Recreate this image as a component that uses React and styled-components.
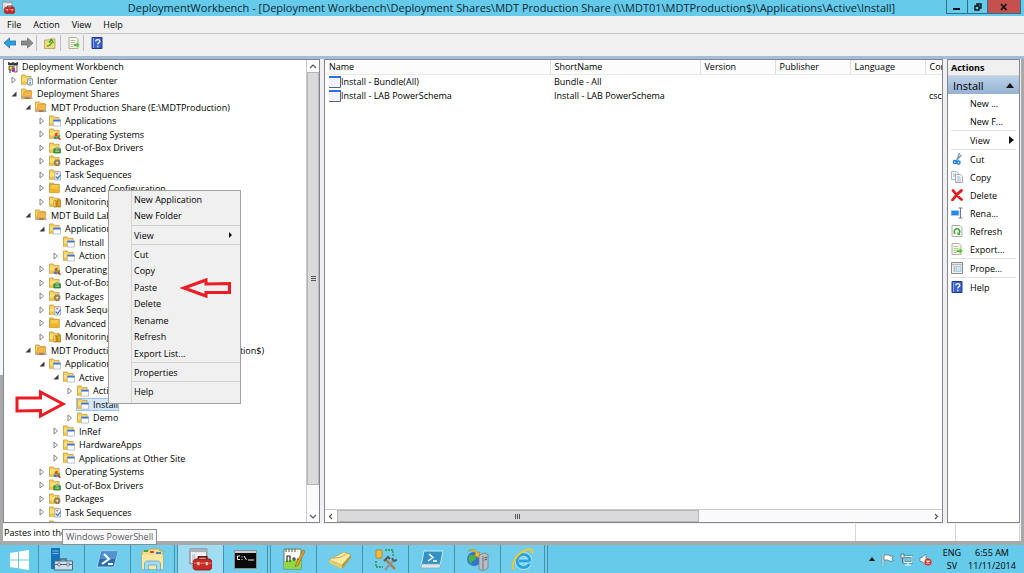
import React from "react";
import styled, { createGlobalStyle, css } from "styled-components";

const FONT = '"Open Sans", "Noto Sans", sans-serif';

const GlobalStyle = createGlobalStyle`
  *, *::before, *::after { box-sizing: border-box; }
  html, body { margin: 0; padding: 0; }
  body { font-family: ${FONT}; font-size: 9px; color: #000; overflow: hidden; }
  button { font: inherit; color: inherit; border: 0; padding: 0; margin: 0; background: none; text-align: left; }
  ul { list-style: none; margin: 0; padding: 0; }
  svg { display: block; flex: none; }
`;

/* ---------- window frame ---------- */

const Desktop = styled.div`
  position: relative;
  display: flex;
  flex-direction: column;
  height: 100vh;
  background: #f0f0f0;
  white-space: nowrap;
`;

const TitleBar = styled.header`
  flex: none;
  display: flex;
  justify-content: space-between;
  align-items: flex-start;
  height: 16px;
  padding: 0 3px 0 2px;
  background: #66cbea;
`;

const AppIcon = styled.span`
  padding-top: 1px;
`;

const Title = styled.h1`
  flex: 1;
  margin: 0;
  padding-left: 62px;
  font-size: 11px;
  font-weight: 400;
  line-height: 16px;
  text-align: center;
  color: #0c2832;
`;

const Caption = styled.div`
  display: flex;
  height: 14px;
  border: 1px solid #2f6f88;
  border-top: 0;
`;

const CaptionButton = styled.button`
  display: flex;
  align-items: center;
  justify-content: center;
  width: ${(p) => (p.$close ? 33 : 20)}px;
  background: ${(p) => (p.$close ? "#c6504c" : "#66cbea")};
  & + & { border-left: 1px solid #2f6f88; }
`;

const MenuBar = styled.nav`
  flex: none;
  display: flex;
  align-items: center;
  gap: 12px;
  height: 18px;
  padding: 0 7px;
  border-bottom: 1px solid #c4c4c4;
`;

const MenuButton = styled.button`
  line-height: 16px;
`;

const ToolBar = styled.div`
  flex: none;
  display: flex;
  align-items: center;
  height: 22px;
  padding: 0 4px 4px;
`;

const ToolButton = styled.button`
  margin-right: ${(p) => p.$after || 0}px;
`;

const ToolDivider = styled.span`
  width: 1px;
  height: 16px;
  margin-right: 7px;
  background: #bdbdbd;
`;

const Workspace = styled.main`
  flex: 1;
  min-height: 0;
  display: flex;
  gap: 4px;
  padding: 0 4px 0 3px;
  border-top: 3px solid #a3bcd8;
  background:
    linear-gradient(#f4f6fa 68%, #a9a9a9 68%) left / 3px 100% no-repeat,
    linear-gradient(to left, #a9a9a9 3px, #f0f0f0 3px);
`;

const Pane = styled.section`
  display: flex;
  min-width: 0;
  overflow: hidden;
  border: 1px solid #828790;
  background: #fff;
`;

const TreePane = styled(Pane)`
  flex: 0 0 317px;
`;

const ListPane = styled(Pane)`
  flex: 1;
  flex-direction: column;
`;

const ActionsPane = styled(Pane)`
  flex: 0 0 73px;
  flex-direction: column;
`;

/* ---------- scroll bars ---------- */

const ScrollBar = styled.div`
  flex: none;
  display: flex;
  flex-direction: ${(p) => (p.$vertical ? "column" : "row")};
  ${(p) => (p.$vertical ? "width: 13px;" : "height: 13px;")}
  background: #fafafa;
  border: 0 solid #c9c9c9;
  ${(p) => (p.$vertical ? "border-left-width: 1px;" : "border-top-width: 1px;")}
`;

const ScrollButton = styled.button`
  display: flex;
  align-items: center;
  justify-content: center;
  width: 12px;
  height: 12px;
  background: #fff;
`;

const Thumb = styled.div`
  display: flex;
  align-items: center;
  justify-content: center;
  flex: ${(p) => p.$share};
  border: 1px solid #b5b5b5;
  background: #dadada;
`;

const Track = styled.div`
  flex: ${(p) => p.$share};
`;

/* ---------- tree ---------- */

const Tree = styled.ul`
  flex: 1;
  min-width: 0;
  overflow: hidden;
  display: grid;
  grid-auto-rows: 13px 14px;
  align-content: start;
`;

const TreeRow = styled.li`
  display: flex;
  align-items: center;
  gap: 2px;
  padding-left: ${(p) => (p.$level ? p.$level * 14 - 8 : 3)}px;
`;

const Twisty = styled.button`
  display: flex;
  align-items: center;
  justify-content: center;
  width: 8px;
  height: 12px;
`;

const TreeLabel = styled.span`
  display: flex;
  align-items: center;
  gap: 4px;
  height: 13px;
  padding: 0 1px;
  ${(p) => p.$selected && css`
    background: #d3e6fb;
    outline: 1px solid #9cc4ee;
    outline-offset: -1px;
  `}
`;

/* ---------- list ---------- */

const ListBody = styled.div`
  flex: 1;
  min-height: 0;
  overflow: hidden;
`;

const Table = styled.table`
  width: 675px;
  table-layout: fixed;
  border-collapse: collapse;
  th, td {
    padding: 0 0 0 4px;
    height: 14px;
    line-height: 14px;
    font-weight: 400;
    text-align: left;
  }
  th {
    border-right: 1px solid #dcdcdc;
    border-bottom: 1px solid #e8e8e8;
    background: #fcfcfc;
  }
`;

const NameCell = styled.span`
  display: flex;
  align-items: center;
  height: 14px;
`;

/* ---------- actions ---------- */

const ActionsTitle = styled.h2`
  margin: 0;
  height: 16px;
  padding-left: 3px;
  border-bottom: 1px solid #d5d5d5;
  background: #f0f0f0;
  font-size: 9px;
  font-weight: 700;
  line-height: 16px;
`;

const ActionsGroup = styled.button`
  display: flex;
  justify-content: space-between;
  align-items: center;
  height: 18px;
  padding: 0 5px;
  background: linear-gradient(#bcd2ea, #96b1d2);
  font-size: 11px;
`;

const ActionItem = styled.button`
  display: flex;
  align-items: center;
  gap: 7px;
  width: 100%;
  height: 18px;
  padding: 0 5px 0 3px;
`;

const ActionText = styled.span`
  flex: 1;
`;

const ActionRule = styled.li`
  height: 1px;
  margin: 0 3px;
  background: #e2e2e2;
`;

const IconSlot = styled.span`
  width: 12px;
  height: 12px;
`;

/* ---------- status bar, task bar ---------- */

const StatusBar = styled.footer`
  flex: none;
  display: flex;
  height: 22px;
  padding: 1px 4px 0 3px;
  border-bottom: 4px solid #a9a9a9;
  background: linear-gradient(to right, #a9a9a9 3px, #f0f0f0 3px, #f0f0f0 calc(100% - 3px), #a9a9a9 calc(100% - 3px));
`;

const StatusCell = styled.div`
  flex: ${(p) => (p.$width ? `0 0 ${p.$width}px` : "1")};
  border-right: 1px solid #d7d7d7;
  background: #fff;
  line-height: 18px;
  padding-left: 1px;
`;

const TaskBar = styled.nav`
  flex: none;
  display: flex;
  height: 28px;
  background: #66cbea;
`;

const TaskButton = styled.button`
  display: flex;
  align-items: center;
  justify-content: center;
  width: ${(p) => (p.$start ? 39 : p.$stacked ? 47 : 46)}px;
  border-right: 1px solid #4590ab;
  background: ${(p) => (p.$active ? "#a2dcf2" : p.$start ? "#66cbea" : "#70cdeb")};
  ${(p) => p.$stacked && css`
    padding-right: 3px;
    box-shadow: inset -2px 0 #70cdeb, inset -3px 0 #4590ab;
  `}
`;

const Tray = styled.div`
  display: flex;
  align-items: center;
  margin-left: auto;
  padding-right: 2px;
`;

const TrayIcons = styled.div`
  display: flex;
  align-items: center;
  gap: 6px;
  margin-right: 10px;
`;

const TrayText = styled.div`
  width: ${(p) => p.$width}px;
  line-height: 13px;
  text-align: center;
`;

/* ---------- overlays ---------- */

const ContextMenu = styled.div`
  position: absolute;
  left: 108px;
  top: 190px;
  width: 133px;
  padding-bottom: 4px;
  border: 1px solid #a0a0a0;
  background: linear-gradient(to right, #f0f0f0 22px, #d4d4d4 22px, #d4d4d4 23px, #f0f0f0 23px);
`;

const MenuGroup = styled.div`
  display: grid;
  grid-auto-rows: 16px 17px;
  & + & {
    padding-top: 3px;
    background: linear-gradient(#cfcfcf, #cfcfcf) 23px 1px / 108px 1px no-repeat;
  }
`;

const MenuItem = styled.button`
  display: flex;
  align-items: center;
  justify-content: space-between;
  padding: 0 8px 0 25px;
`;

const Tooltip = styled.div`
  position: absolute;
  left: 62px;
  bottom: 28px;
  height: 16px;
  padding: 0 3px;
  border: 1px solid #8c8c8c;
  background: #f8f8fa;
  color: #5c5c5c;
  line-height: 14px;
`;

const Pointer = styled.svg`
  position: absolute;
  left: ${(p) => p.$x}px;
  top: ${(p) => p.$y}px;
  fill: #fff;
  fill-opacity: ${(p) => p.$fill};
  stroke: #ec1c24;
  stroke-width: 3;
`;

/* ---------- drawings ---------- */

const Chevron = ({ dir }) => {
  const d = { up: "M1 5l3-3 3 3", down: "M1 2l3 3 3-3", left: "M5 1L2.500 3.500 5 6", right: "M3 1l2.500 2.500L3 6" }[dir];
  return <svg width="8" height="7" viewBox="0 0 8 7"><path d={d} fill="none" stroke="#555" strokeWidth="1.200" /></svg>;
};

const FolderShape = () => (
  <>
    <path d="M.5 1h4l1 1.500h5V11H.5z" fill="#f3d062" stroke="#b98f2c" strokeWidth=".7" />
    <path d="M1 4h9v7H1z" fill="#fbe06e" />
    <path d="M1 8h9v3H1z" fill="#eec250" />
  </>
);

const treeOverlays = {
  plain: (
    <>
      <path d="M1 2.500h9.500V11H1z" fill="#f7cb48" stroke="#b08020" strokeWidth=".6" />
      <path d="M1 7h9.500v4H1z" fill="#efb526" />
    </>
  ),
  app: (
    <>
      <path d="M4.500 5h7.500v6.500H4.500z" fill="#fff" stroke="#8a9bb5" strokeWidth=".6" />
      <path d="M4.500 5h7.500v1.800H4.500z" fill="#3d74d6" />
    </>
  ),
  info: (
    <>
      <path d="M7 5h5v6l-2 1-3-1z" fill="#f4f8ff" stroke="#5b7fc0" strokeWidth=".8" />
      <path d="M9 6h1v1H9zM9 8h1v3H9z" fill="#1c55c4" />
    </>
  ),
  share: (
    <>
      <path d="M3 3.500h8.500l-1 6H2z" fill="#f7b64a" stroke="#c8862a" strokeWidth=".5" />
      <path d="M1 9.500h11v2H1z" fill="#a9adb3" />
      <path d="M4 10.500h5" stroke="#b5672a" strokeWidth="1.500" />
    </>
  ),
  os: (
    <>
      <path d="M6 6l3-1.500V8L6 8.500z" fill="#e4442a" />
      <path d="M5 9l3-.5V12l-3-1z" fill="#3575d8" />
      <path d="M8.500 8l3-1v3l-3 1z" fill="#53a833" />
      <path d="M9 10l3 2" stroke="#d42020" strokeWidth="1.600" />
    </>
  ),
  driver: (
    <>
      <path d="M5 7h7v4.500H5z" fill="#3b9c3b" stroke="#226622" strokeWidth=".6" />
      <path d="M7 5h3v3H7z" fill="#8eb4a0" />
      <path d="M6.500 9.500h4" stroke="#bfe8b4" />
    </>
  ),
  package: (
    <>
      <circle cx="8.500" cy="8" r="3" fill="#a88c55" stroke="#77705f" strokeWidth="1.200" strokeDasharray="1.500 .8" />
      <circle cx="8.500" cy="8" r="1" fill="#f6efd8" />
    </>
  ),
  task: (
    <>
      <path d="M6 3h6v8.500H6z" fill="#eef3fb" stroke="#8698b4" strokeWidth=".7" />
      <path d="M7 8l2 2 3-4" fill="none" stroke="#2f6fcd" strokeWidth="1.200" />
      <path d="M7.500 5h2" stroke="#d33" />
    </>
  ),
  monitor: (
    <>
      <path d="M5 5h3v6.500H5zM9 4h3v7.500H9z" fill="#eaa91f" stroke="#94690f" strokeWidth=".7" />
      <path d="M5.500 5v6" stroke="#ffe79b" />
    </>
  ),
};

const TreeIcon = ({ kind }) => {
  if (kind === "root") {
    return (
      <svg width="10" height="12" viewBox="0 0 10 12">
        <path d="M0 1l3 1 2-1 2 1 3-1v3H0z" fill="#3c3c3c" />
        <path d="M1 5h4v4H1z" fill="#e6d52e" stroke="#222" strokeWidth=".7" />
        <path d="M6 4h3v7H6z" fill="#f5f5f5" stroke="#222" strokeWidth=".7" />
        <path d="M4 7h3v4H4z" fill="#b338a0" />
        <path d="M2 9v3" stroke="#333" />
      </svg>
    );
  }
  return <svg width="12" height="12" viewBox="0 0 12.500 12.500"><FolderShape />{treeOverlays[kind]}</svg>;
};

const DocLines = () => (
  <>
    <path d="M1 .5h7l2 2v9H1z" fill="#fbfbf2" stroke="#9a9a84" strokeWidth=".8" />
    <path d="M2.500 3.500h5M2.500 5.500h5M2.500 7.500h4M2.500 9.500h4" stroke="#b1b18f" strokeWidth=".8" />
  </>
);

const glyphs = {
  back: <path d="M0 6l5.500-5v3H12v4H5.500v3z" fill="#2f9fe4" stroke="#1b6fae" strokeWidth=".7" />,
  forward: <path d="M12 6L6.500 1v3H0v4h6.500v3z" fill="#8b8b8b" stroke="#666" strokeWidth=".7" />,
  up: (
    <>
      <path d="M.5 3h4l1-1H11v9.500H.5z" fill="#f1d980" stroke="#b39a4a" strokeWidth=".8" />
      <path d="M3 9c2 0 4-1 4.500-4M5 5.500l2.500-3 2 3.500" fill="none" stroke="#46a52c" strokeWidth="1.500" />
    </>
  ),
  export: (
    <>
      <DocLines />
      <path d="M5.500 6.500h3V4.500L12 8l-3.500 3.500v-2h-3z" fill="#5fc63a" stroke="#fff" strokeWidth=".4" />
    </>
  ),
  help: (
    <>
      <path d="M1 .5h10v11H1z" fill="#3a62cc" stroke="#20398b" />
      <path d="M2.500 1v10" stroke="#8ba6ec" />
      <path d="M4.800 4.500c0-2.500 4-2.500 4-.2 0 1.500-2 1.500-2 3.200M6.800 8.800v1.400" fill="none" stroke="#fff" strokeWidth="1.300" />
    </>
  ),
  cut: (
    <>
      <path d="M8.500 0L5.500 8M10.500 2L4 9" stroke="#7d9bb3" strokeWidth="1.400" />
      <circle cx="4" cy="9" r="1.600" fill="none" stroke="#1c86d6" strokeWidth="1.500" />
      <circle cx="7.500" cy="9.500" r="1.500" fill="none" stroke="#1c86d6" strokeWidth="1.500" />
    </>
  ),
  copy: (
    <>
      <path d="M.5.5h5l2 2v6h-7z" fill="#f2f5f9" stroke="#9ba6b3" strokeWidth=".8" />
      <path d="M2 3h3M2 5h3" stroke="#a9bcd6" />
      <path d="M4.500 3.500h5l2 2v6h-7z" fill="#f2f5f9" stroke="#8f9aa8" strokeWidth=".8" />
      <path d="M6 6h3M6 8h4M6 10h4" stroke="#a9bcd6" />
    </>
  ),
  delete: <path d="M2 1.500C4 4 8 8.500 10.500 10.500M10.500 1.500C7 4 4 7.500 1.500 11" fill="none" stroke="#df1f1f" strokeWidth="2.800" strokeLinecap="round" />,
  rename: (
    <>
      <path d="M0 3.500h8v5H0z" fill="#2788e8" stroke="#a8c9ee" />
      <path d="M7.500 1h4M9.500 1v10M7.500 11h4" fill="none" stroke="#667" strokeWidth=".9" />
    </>
  ),
  refresh: (
    <>
      <path d="M1 .5h8l2 2v9H1z" fill="#fafafa" stroke="#9a9a9a" strokeWidth=".8" />
      <path d="M4.200 8.800a2.800 2.800 0 1 1 3.600 0" fill="none" stroke="#33a92b" strokeWidth="1.500" />
      <path d="M6.500 7v3h3z" fill="#33a92b" />
    </>
  ),
  properties: (
    <>
      <path d="M.5.500h11v11H.5z" fill="#f3f3f3" stroke="#8c8c8c" />
      <path d="M1 2.500h10" stroke="#bcbcbc" strokeWidth="1.500" />
      <path d="M2.500 5h2M2.500 7h2M2.500 9h2" stroke="#888" />
      <path d="M5.500 4.500h4.500v5H5.500z" fill="#c9e6f2" stroke="#8db7c8" strokeWidth=".6" />
    </>
  ),
};

const Glyph = ({ name }) => <svg width="12" height="12" viewBox="0 0 12 12">{glyphs[name]}</svg>;

const Toolbox = ({ size }) => (
  <svg width={size} height={size} viewBox="0 0 22 22">
    <path d="M1 1h16v14H1z" fill="#f4f4f4" stroke="#777" />
    <path d="M1 1h16v3H1z" fill="#a9b2bb" />
    <path d="M3 6h3v7H3z" fill="#c6cbd1" />
    <path d="M9 11V8.500h8V11" fill="none" stroke="#6b1414" strokeWidth="1.500" />
    <path d="M4 12.500l2-2h14l2 2v6.500l-2 2H6l-2-1.500z" fill="#c82b22" stroke="#7c1611" strokeWidth=".8" />
    <path d="M4.500 14.500h17" stroke="#ee7b74" />
    <path d="M8 13.500h2v3H8zM16 13.500h2v3h-2z" fill="#f3d9d4" />
  </svg>
);

const taskGlyphs = {
  start: <path d="M2 5l8-1.200v7.700H2zM11 3.600L21 2v9.500H11zM2 12.500h8v7.700L2 19zM11 12.500h10V22l-10-1.600z" fill="#fff" />,
  server: (
    <>
      <path d="M1 0h9v21H1z" fill="#1773b8" />
      <path d="M2.500 3h6M2.500 5.500h6" stroke="#78bbe8" />
      <path d="M10 13v-2h6v2" fill="none" stroke="#4c6a80" strokeWidth="1.500" />
      <path d="M4.500 13h18v9h-18z" fill="#cfdde6" stroke="#4c6a80" />
      <path d="M5 16.500h17" stroke="#4c6a80" />
      <path d="M8 15h2v3H8zM17 15h2v3h-2z" fill="#fff" stroke="#4c6a80" strokeWidth=".7" />
    </>
  ),
  powershell: (
    <>
      <path d="M5 3h17l-4 16H1z" fill="#2a6cae" stroke="#a5cfe9" />
      <path d="M6 3.500h15.500l-2 7.500H4z" fill="#4f94cf" />
      <path d="M8 6l5 5-7 5M12 16h5" fill="none" stroke="#fff" strokeWidth="2" />
    </>
  ),
  explorer: (
    <>
      <path d="M1 3h6l1-2h10l1 2h3v18H1z" fill="#f5dc87" stroke="#c29f45" strokeWidth=".8" />
      <path d="M3 2h4v2H3z" fill="#45a14a" /><path d="M9 3h4v2H9z" fill="#d44" /><path d="M15 4h5v2h-5z" fill="#4b83cf" />
      <path d="M1 7h21v14H1z" fill="#f9e7a2" />
      <path d="M3.500 22v-6c0-3 3-3 3-3h10s3 0 3 3v6h-4v-5h-8v5z" fill="#a4d8f3" stroke="#5ca5cc" strokeWidth=".8" />
    </>
  ),
  cmd: (
    <>
      <path d="M.5 2.500h22v18H.5z" fill="#0a0a0a" stroke="#8a8f94" />
      <path d="M1 3h21v2H1z" fill="#c9cdd1" />
      <path d="M6 8H3.500v3.500H6M8 8.500v1M8 11v1M10 8l2.500 4M14 12h6" fill="none" stroke="#eee" />
    </>
  ),
  notepad: (
    <>
      <path d="M2 1h17v20H2z" fill="#fafcf5" stroke="#687a5a" />
      <path d="M2.500 13L19 11v10H2.500z" fill="#8dd843" />
      <path d="M4 1v3M7 1v3M10 1v3M13 1v3" stroke="#555" />
      <path d="M5 14V8h3v6M10 11h4M12 9v4M15 11h3" fill="none" stroke="#333" strokeWidth="1.200" />
      <path d="M21 2l-7 14-1 3 3-2 7-14z" fill="#f3a326" stroke="#8c5910" strokeWidth=".6" />
    </>
  ),
  notes: (
    <>
      <path d="M1 12L16 4l7 3-9 10z" fill="#f9eaa0" stroke="#b69b3c" strokeWidth=".6" />
      <path d="M1 12l13 5v4L1 15z" fill="#e6cd66" /><path d="M14 17l9-10v3l-9 11z" fill="#b8993e" />
      <path d="M5 10c6 0 10-1 14-5" fill="none" stroke="#c9ae51" />
    </>
  ),
  tools: (
    <>
      <path d="M2 2h6v8H2z" fill="#f6bb3c" stroke="#b07d17" strokeWidth=".8" />
      <path d="M11 2h8v7M2 13v6h7" fill="none" stroke="#2c8a3a" strokeWidth="1.300" strokeDasharray="2 1" />
      <path d="M12 12l9 9" stroke="#b4793c" strokeWidth="2.400" /><path d="M20 12l-9 10" stroke="#8c949c" strokeWidth="2.200" />
      <path d="M10 13l4-4 2 2M18 10l2 3 3-1" fill="none" stroke="#54595e" strokeWidth="2" />
    </>
  ),
  ise: (
    <>
      <path d="M4 3h19l-3 15H1z" fill="#3291c6" stroke="#cde9f5" />
      <path d="M9 6l4 3.500L8 13M13 13h4" fill="none" stroke="#fff" strokeWidth="1.500" />
      <path d="M1.500 16h19l-.5 4H1z" fill="#d9e6ed" stroke="#8aa4b3" strokeWidth=".7" />
    </>
  ),
  iis: (
    <>
      <circle cx="8" cy="11" r="7" fill="#2f74d0" />
      <path d="M3 8c3-3 4 1 6 0s1 5-2 5 0 4-2 3-3-5-2-8z" fill="#4cb347" />
      <path d="M2 3c4-3 8-2 10 2l2-1-1 6-5-3 2-1C9 3 6 2 2 3z" fill="#f8bb2d" stroke="#b87b10" strokeWidth=".5" />
      <path d="M13 7l5-2 4 1.500V20l-5 3-4-2z" fill="#b9bec4" stroke="#6e757b" strokeWidth=".7" />
      <path d="M17 8v14" stroke="#6e757b" /><path d="M18.500 10l2.500-1M18.500 12l2.500-1" stroke="#555" />
    </>
  ),
  ie: (
    <>
      <path d="M18.500 13H8M18.500 16c-1.500 2.500-3.500 3.500-6 3.500a6.500 6.500 0 1 1 6.500-6.500" fill="none" stroke="#b9eafd" strokeWidth="5" />
      <path d="M18.500 13H8M18.500 16c-1.500 2.500-3.500 3.500-6 3.500a6.500 6.500 0 1 1 6.500-6.500" fill="none" stroke="#2ba2e0" strokeWidth="3" />
      <path d="M3 21.500C-1 17 6 4 17 1.500c4-.8 5 1 4.500 4" fill="none" stroke="#f6c52c" strokeWidth="2" />
    </>
  ),
};

const TaskGlyph = ({ name }) => <svg width="23" height="23" viewBox="0 0 23 23">{taskGlyphs[name]}</svg>;

const ListIcon = () => (
  <svg width="12" height="12" viewBox="0 0 12 12">
    <path d="M0 0h12v12H0z" fill="#f1f4fc" />
    <path d="M0 0h12v2H0z" fill="#2e6fe0" />
    <path d="M11.500 1v10.500H0" fill="none" stroke="#5a6680" />
  </svg>
);

/* ---------- data ---------- */

const shareFolders = [
  [3, "Operating Systems", "os", "closed"],
  [3, "Out-of-Box Drivers", "driver", "closed"],
  [3, "Packages", "package", "closed"],
  [3, "Task Sequences", "task", "closed"],
  [3, "Advanced Configuration", "plain", "closed"],
];

const tree = [
  [0, "Deployment Workbench", "root"],
  [1, "Information Center", "info", "closed"],
  [1, "Deployment Shares", "share", "open"],
  [2, "MDT Production Share (E:\\MDTProduction)", "share", "open"],
  [3, "Applications", "app", "closed"],
  ...shareFolders,
  [3, "Monitoring", "monitor", "closed"],
  [2, "MDT Build Lab", "share", "open"],
  [3, "Applications", "app", "open"],
  [4, "Install", "app", "leaf"],
  [4, "Action", "app", "closed"],
  ...shareFolders,
  [3, "Monitoring", "monitor", "closed"],
  [2, "MDT Production Share (\\\\MDT01\\MDTProduction$)", "share", "open"],
  [3, "Applications", "app", "open"],
  [4, "Active", "app", "open"],
  [5, "Action", "app", "closed"],
  [5, "Install", "app", "leaf", true],
  [5, "Demo", "app", "closed"],
  [4, "InRef", "app", "closed"],
  [4, "HardwareApps", "app", "closed"],
  [4, "Applications at Other Site", "app", "closed"],
  ...shareFolders,
];

const columns = [["Name", 225], ["ShortName", 150], ["Version", 75], ["Publisher", 75], ["Language", 75], ["Com", 75]];
const rows = [
  ["Install - Bundle(All)", "Bundle - All", ""],
  ["Install - LAB PowerSchema", "Install - LAB PowerSchema", "csc"],
];

const actions = [
  ["New ..."], ["New F..."], null, ["View", null, true], null,
  ["Cut", "cut"], ["Copy", "copy"], ["Delete", "delete"], ["Rena...", "rename"], ["Refresh", "refresh"], ["Export...", "export"], null,
  ["Prope...", "properties"], null, ["Help", "help"],
];

const menuGroups = [
  ["New Application", "New Folder"],
  ["View"],
  ["Cut", "Copy", "Paste", "Delete", "Rename", "Refresh", "Export List..."],
  ["Properties"],
  ["Help"],
];

const tasks = [
  ["Server Manager", "server"], ["Windows PowerShell", "powershell"], ["File Explorer", "explorer", "stacked"],
  ["Deployment Workbench", "toolbox", "active"], ["Command Prompt", "cmd", "stacked"], ["Notepad++", "notepad"],
  ["Sticky Notes", "notes"], ["Configuration", "tools"], ["PowerShell ISE", "ise"], ["IIS Manager", "iis"],
  ["Internet Explorer", "ie", "stacked"],
];

/* ---------- parts ---------- */

const TreeItem = ({ level, label, kind, state, selected }) => (
  <TreeRow $level={level}>
    {level > 0 && (state === "leaf" ? <Twisty as="span" /> : (
      <Twisty aria-label={`Toggle ${label}`}>
        <svg width="6" height="8" viewBox="0 0 6 8">
          {state === "open"
            ? <path d="M5.500 1.500v5H.5z" fill="#3a3a3a" />
            : <path d="M1 1l3.500 3L1 7z" fill="#fff" stroke="#777" strokeWidth=".9" />}
        </svg>
      </Twisty>
    ))}
    <TreeLabel $selected={selected}><TreeIcon kind={kind} />{label}</TreeLabel>
  </TreeRow>
);

const Triangle = ({ up }) => (
  <svg width={up ? 8 : 5} height={up ? 5 : 8} viewBox={up ? "0 0 8 5" : "0 0 5 8"}>
    <path d={up ? "M0 5l4-5 4 5z" : "M0 0l5 4-5 4z"} fill="#111" />
  </svg>
);

export default function App() {
  return (
    <Desktop>
      <GlobalStyle />
      <TitleBar>
        <AppIcon><Toolbox size={13} /></AppIcon>
        <Title>{"DeploymentWorkbench - [Deployment Workbench\\Deployment Shares\\MDT Production Share (\\\\MDT01\\MDTProduction$)\\Applications\\Active\\Install]"}</Title>
        <Caption>
          <CaptionButton aria-label="Minimize">
            <svg width="8" height="8" viewBox="0 0 8 8"><path d="M0 5h7v2H0z" fill="#111" /></svg>
          </CaptionButton>
          <CaptionButton aria-label="Restore">
            <svg width="8" height="8" viewBox="0 0 8 8"><path d="M1 3h4v4H1zM3 3V1h4v4H5" fill="none" stroke="#111" strokeWidth="1.400" /></svg>
          </CaptionButton>
          <CaptionButton aria-label="Close" $close>
            <svg width="8" height="8" viewBox="0 0 8 8"><path d="M1 1l5.500 6M6.500 1L1 7" stroke="#111" strokeWidth="1.800" /></svg>
          </CaptionButton>
        </Caption>
      </TitleBar>

      <MenuBar>
        {["File", "Action", "View", "Help"].map((m) => <MenuButton key={m}>{m}</MenuButton>)}
      </MenuBar>

      <ToolBar>
        <ToolButton aria-label="Back" $after={5}><Glyph name="back" /></ToolButton>
        <ToolButton aria-label="Forward" $after={3}><Glyph name="forward" /></ToolButton>
        <ToolDivider />
        <ToolButton aria-label="Up" $after={4}><Glyph name="up" /></ToolButton>
        <ToolDivider />
        <ToolButton aria-label="Export list" $after={3}><Glyph name="export" /></ToolButton>
        <ToolDivider />
        <ToolButton aria-label="Help"><Glyph name="help" /></ToolButton>
      </ToolBar>

      <Workspace>
        <TreePane>
          <Tree>
            {tree.map(([level, label, kind, state, selected], i) => (
              <TreeItem key={i} level={level} label={label} kind={kind} state={state} selected={selected} />
            ))}
          </Tree>
          <ScrollBar $vertical>
            <ScrollButton aria-label="Scroll up"><Chevron dir="up" /></ScrollButton>
            <Thumb $share={413}>
              <svg width="5" height="6" viewBox="0 0 5 6"><path d="M0 .5h5M0 2.500h5M0 4.500h5" stroke="#555" /></svg>
            </Thumb>
            <Track $share={25} />
            <ScrollButton aria-label="Scroll down"><Chevron dir="down" /></ScrollButton>
          </ScrollBar>
        </TreePane>

        <ListPane>
          <ListBody>
            <Table>
              <colgroup>{columns.map(([name, width]) => <col key={name} width={width} />)}</colgroup>
              <thead><tr>{columns.map(([name]) => <th key={name}>{name}</th>)}</tr></thead>
              <tbody>
                {rows.map(([name, short, command]) => (
                  <tr key={name}>
                    <td><NameCell><ListIcon />{name}</NameCell></td>
                    <td>{short}</td><td /><td /><td /><td>{command}</td>
                  </tr>
                ))}
              </tbody>
            </Table>
          </ListBody>
          <ScrollBar>
            <ScrollButton aria-label="Scroll left"><Chevron dir="left" /></ScrollButton>
            <Thumb $share={361}>
              <svg width="6" height="5" viewBox="0 0 6 5"><path d="M.5 0v5M2.500 0v5M4.500 0v5" stroke="#555" /></svg>
            </Thumb>
            <Track $share={232} />
            <ScrollButton aria-label="Scroll right"><Chevron dir="right" /></ScrollButton>
          </ScrollBar>
        </ListPane>

        <ActionsPane>
          <ActionsTitle>Actions</ActionsTitle>
          <ActionsGroup>Install<Triangle up /></ActionsGroup>
          <ul>
            {actions.map((a, i) => a === null ? <ActionRule key={i} /> : (
              <li key={i}>
                <ActionItem>
                  {a[1] ? <Glyph name={a[1]} /> : <IconSlot />}
                  <ActionText>{a[0]}</ActionText>
                  {a[2] && <Triangle />}
                </ActionItem>
              </li>
            ))}
          </ul>
        </ActionsPane>
      </Workspace>

      <StatusBar>
        <StatusCell>Pastes into the</StatusCell>
        <StatusCell $width={100} />
        <StatusCell $width={64} />
      </StatusBar>

      <TaskBar>
        <TaskButton $start aria-label="Start"><TaskGlyph name="start" /></TaskButton>
        {tasks.map(([label, name, mode]) => (
          <TaskButton key={label} aria-label={label} $active={mode === "active"} $stacked={mode === "stacked"}>
            {name === "toolbox" ? <Toolbox size={23} /> : <TaskGlyph name={name} />}
          </TaskButton>
        ))}
        <Tray>
          <TrayIcons>
            <svg width="6" height="4" viewBox="0 0 6 4"><path d="M0 4l3-4 3 4z" fill="#111" /></svg>
            <svg width="13" height="13" viewBox="0 0 13 13">
              <path d="M2 1v12" stroke="#4a6a76" strokeWidth="2.400" /><path d="M2 1v12" stroke="#fff" strokeWidth="1.200" />
              <path d="M3 2h5l1 1h3.500L11 5.500 12.500 8H8L7 7H3z" fill="#fff" stroke="#4a6a76" strokeWidth=".7" />
            </svg>
            <svg width="13" height="13" viewBox="0 0 13 13">
              <path d="M4 3.500h8v6H4z" fill="#66cbea" stroke="#3f6270" strokeWidth="2.200" />
              <path d="M4 3.500h8v6H4zM8 9.500V12M5 12h6" fill="none" stroke="#fff" strokeWidth="1.100" />
              <path d="M1 1h3v4H1zM2.500 5v5" fill="#fff" stroke="#3f6270" strokeWidth=".8" />
            </svg>
            <svg width="13" height="13" viewBox="0 0 13 13">
              <path d="M1 4.500h2L7 1v11L3 8.500H1z" fill="#fff" stroke="#55717c" strokeWidth=".7" />
              <circle cx="9" cy="9" r="3.600" fill="#dc2f2a" /><path d="M7.500 7.500l3 3M10.500 7.500l-3 3" stroke="#fff" strokeWidth="1.200" />
            </svg>
          </TrayIcons>
          <TrayText $width={20}>ENG<br />SV</TrayText>
          <TrayText $width={60}>6:55 AM<br />11/11/2014</TrayText>
        </Tray>
      </TaskBar>

      <ContextMenu role="menu">
        {menuGroups.map((group) => (
          <MenuGroup key={group[0]}>
            {group.map((label) => (
              <MenuItem key={label} role="menuitem">
                {label}
                {label === "View" && <svg width="3" height="6" viewBox="0 0 3 6"><path d="M0 0l3 3-3 3z" fill="#111" /></svg>}
              </MenuItem>
            ))}
          </MenuGroup>
        ))}
      </ContextMenu>

      <Tooltip role="tooltip">Windows PowerShell</Tooltip>

      <Pointer $x={180} $y={276} $fill={0} width="54" height="24" viewBox="0 0 54 24">
        <path d="M4 12L26 4v4l23.500-.5v9H26V20z" />
      </Pointer>
      <Pointer $x={14} $y={388} $fill={1} width="54" height="32" viewBox="0 0 54 32">
        <path d="M3 10h23.500V4L49 16 26.500 28v-5.500L3 23z" />
      </Pointer>
    </Desktop>
  );
}
